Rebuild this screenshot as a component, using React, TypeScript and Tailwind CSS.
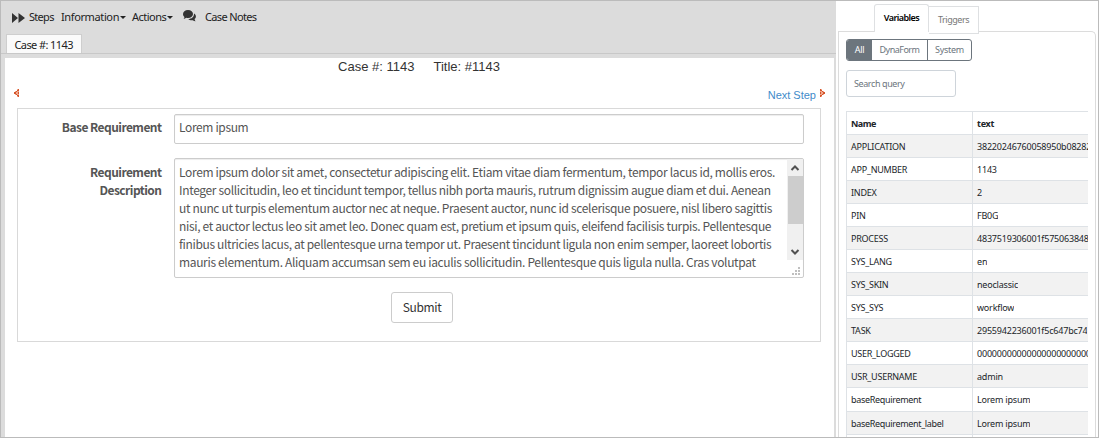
import React from "react";

const rows: [string, string][] = [
  ["APPLICATION", "38220246760058950b08282"],
  ["APP_NUMBER", "1143"],
  ["INDEX", "2"],
  ["PIN", "FB0G"],
  ["PROCESS", "4837519306001f575063848"],
  ["SYS_LANG", "en"],
  ["SYS_SKIN", "neoclassic"],
  ["SYS_SYS", "workflow"],
  ["TASK", "2955942236001f5c647bc74"],
  ["USER_LOGGED", "00000000000000000000000"],
  ["USR_USERNAME", "admin"],
  ["baseRequirement", "Lorem ipsum"],
  ["baseRequirement_label", "Lorem ipsum"],
];

const description = [
  "Lorem ipsum dolor sit amet, consectetur adipiscing elit. Etiam vitae diam fermentum, tempor lacus id, mollis eros.",
  "Integer sollicitudin, leo et tincidunt tempor, tellus nibh porta mauris, rutrum dignissim augue diam et dui. Aenean",
  "ut nunc ut turpis elementum auctor nec at neque. Praesent auctor, nunc id scelerisque posuere, nisl libero sagittis",
  "nisi, et auctor lectus leo sit amet leo. Donec quam est, pretium et ipsum quis, eleifend facilisis turpis. Pellentesque",
  "finibus ultricies lacus, at pellentesque urna tempor ut. Praesent tincidunt ligula non enim semper, laoreet lobortis",
  "mauris elementum. Aliquam accumsan sem eu iaculis sollicitudin. Pellentesque quis ligula nulla. Cras volutpat",
];

function Caret() {
  return <span className="ml-px mb-px h-0 w-0 border-x-[3px] border-t-[3px] border-x-transparent border-t-[#222]" />;
}

function Toolbar() {
  return (
    <div className="flex h-[33px] items-center pl-[11px] font-['Noto_Sans',sans-serif] text-[11px] text-[#222]">
      <svg className="mr-1 h-[10px] w-[13px]" viewBox="0 0 13 10" fill="#333">
        <path d="M0 0 6 5 0 10ZM6.5 0 13 5 6.5 10Z" />
      </svg>
      <span className="w-[32px] tracking-[-0.7px]">Steps</span>
      <span className="flex w-[71px] items-center tracking-[-0.38px]">Information<Caret /></span>
      <span className="flex w-[51px] items-center tracking-[-0.5px]">Actions<Caret /></span>
      <svg className="mb-[3px] h-[12px] w-[13px]" viewBox="0 0 13 12" fill="#333">
        <path d="M5 0C8 0 10 1.7 10 4S8 8 5 8C4.4 8 3.8 7.9 3.3 7.8 2.5 8.5 1.5 9 .6 9 1.1 8.3 1.4 7.6 1.4 7 .5 6.2 0 5.200 0 4 0 1.700 2 0 5 0Z" />
        <path d="M11 3.500C12.200 4.200 12.900 5.300 12.900 6.500 12.900 7.500 12.400 8.400 11.600 9 11.600 9.900 12 10.600 12.600 11.300 11.500 11.300 10.500 10.800 9.700 10.200 8 10.500 6.200 10 5.200 9 8.700 9 11.200 6.800 11 3.500Z" />
      </svg>
      <span className="ml-[9px] tracking-[-0.65px]">Case Notes</span>
    </div>
  );
}

function StepArrow({ flip = false }: { flip?: boolean }) {
  return (
    <svg className={flip ? "h-[8px] w-[6px] -scale-x-100" : "h-[8px] w-[6px]"} viewBox="0 0 6 8" shapeRendering="crispEdges">
      <path d="M3 0h2v8H3zM1 2h2v4H1zM0 3h1v2H0z" fill="#f0a78c" />
      <path d="M4 0h1v2H4zM2 2h1v1H2zM3 1h1v1H3zM0 3h2v2H0zM2 5h1v1H2zM3 6h1v1H3zM4 6h1v2H4zM4 3h1v2H4z" fill="#d4552c" />
    </svg>
  );
}

function CaseForm() {
  return (
    <div className="ml-3 mt-[6px] h-[234px] w-[804px] border border-[#d9d9d9] pt-[5px] font-['Noto_Sans_CJK_SC',sans-serif] text-[#555]">
      <div className="flex h-[30px]">
        <div className="w-[143.500px] pt-[4px] text-right text-[12px] font-bold leading-[18px] tracking-[-0.54px]">Base Requirement</div>
        <div className="ml-[12.500px] w-[630px] rounded-[2px] border border-[#ccc] pl-[4px] pt-[2px] text-[12px] leading-[20px] tracking-[-0.37px] shadow-[inset_0_1px_1px_rgba(0,0,0,0.075)]">Lorem ipsum</div>
      </div>
      <div className="mt-[14px] flex h-[120px]">
        <div className="w-[143.500px] pt-[5px] text-right text-[12px] font-bold leading-[18px] tracking-[-0.54px]">Requirement<br />Description</div>
        <div className="ml-[12.500px] flex w-[630px] overflow-hidden rounded-[2px] border border-[#ccc] shadow-[inset_0_1px_1px_rgba(0,0,0,0.075)]">
          <div className="w-[612px] whitespace-nowrap pl-[4px] pt-[4px] text-[12px] leading-[18px] tracking-[-0.343px]">
            {description.map((line) => <div key={line}>{line}</div>)}
          </div>
          <div className="flex w-[16px] flex-col">
            <div className="flex h-[101px] flex-col items-center justify-between bg-[#f0f0f0]">
              <svg className="h-[17px] w-[16px]" viewBox="0 0 16 17" fill="none" stroke="#505050" strokeWidth="2"><path d="m4.500 11 3.500-3.500L11.500 11" /></svg>
              <div className="mb-auto h-[48px] w-[15px] bg-[#cdcdcd]" />
              <svg className="h-[17px] w-[16px]" viewBox="0 0 16 17" fill="none" stroke="#505050" strokeWidth="2"><path d="m4.500 7 3.500 3.500L11.500 7" /></svg>
            </div>
            <svg className="h-[17px] w-[16px]" viewBox="0 0 16 17" fill="#bfbfbf" shapeRendering="crispEdges">
              <path d="M11 7h2v2h-2zM8 10h2v2H8zM11 10h2v2h-2zM5 13h2v2H5zM8 13h2v2H8zM11 13h2v2h-2z" />
            </svg>
          </div>
        </div>
      </div>
      <button className="ml-[373px] mt-[14px] block h-[31px] w-[62px] rounded-[3px] border border-[#ccc] bg-white pb-[2px] text-[12px] leading-[26px] tracking-[-0.35px] text-[#333]">Submit</button>
    </div>
  );
}

function CasePane() {
  return (
    <main className="flex w-[835px] flex-col bg-[#dcdcdc]">
      <Toolbar />
      <div className="flex h-[20px] border-b border-[#c8c8c8] pl-[5px]">
        <div className="w-[76px] border border-b-0 border-[#cecece] bg-[#fafafa] pl-[7.500px] font-['Noto_Sans',sans-serif] text-[11px] leading-[20px] tracking-[-0.6px] text-[#222]">Case #: 1143</div>
      </div>
      <div className="ml-[4px] mr-[2px] mt-1 flex-1 bg-white font-['Liberation_Sans',sans-serif]">
        <div className="flex h-[17px] justify-center gap-[19px] pr-px text-[13px] leading-[17px] text-[#333]">
          <span>Case #: 1143</span><span>Title: #1143</span>
        </div>
        <div className="mt-[12px] flex h-[15px] items-start justify-between pl-[9px] pr-[9px]">
          <div className="pt-[2px]"><StepArrow /></div>
          <div className="flex items-start gap-[3px] pt-[2px] text-[11px] leading-[13px] text-[#428bca]"><span>Next Step</span><StepArrow flip /></div>
        </div>
        <CaseForm />
      </div>
    </main>
  );
}

function VariablesPane() {
  return (
    <aside className="flex w-[262px] flex-col bg-white pl-[2px] font-['Noto_Sans',sans-serif] text-[9px] tracking-[-0.25px]">
      <div className="z-10 -mb-px flex h-[31px] items-start pl-[36px] pt-[3px]">
        <div className="h-[28px] w-[55px] rounded-t-[3px] border border-b-0 border-[#dee0e2] bg-white text-center font-semibold leading-[26px] tracking-[-0.55px] text-black">Variables</div>
        <div className="mt-[2px] h-[28px] w-[50px] border border-l-0 border-[#dee0e2] bg-white text-center leading-[26px] tracking-[-0.45px] text-[#777]">Triggers</div>
      </div>
      <section className="mr-[2px] flex-1 overflow-hidden rounded-tr-[5px] border border-b-0 border-[#dcdcdc] pl-[7px] pr-[7px] pt-[7px]">
        <div className="flex h-[22px] w-[126px] overflow-hidden rounded-[3px] border border-[#6c757d] text-center leading-[20px] text-[#6c757d]">
          <span className="w-[25px] bg-[#6c757d] text-white">All</span>
          <span className="w-[56px] border-r border-[#6c757d] tracking-[-0.5px]">DynaForm</span>
          <span className="flex-1">System</span>
        </div>
        <div className="mt-[9px] h-[27px] w-[110px] rounded-[3px] border border-[#ced4da] pl-[7px] leading-[25px] tracking-[-0.4px] text-[#6c757d]">Search query</div>
        <div className="mt-[14px] border-l border-t border-[#dee2e6] leading-[22px] text-[#212529]">
          <div className="flex h-[23px] border-b border-[#dee2e6] font-bold">
            <div className="w-[126px] border-r border-[#dee2e6] pl-[4px] pt-px tracking-[-0.5px]">Name</div><div className="pl-[4px] pt-px">text</div>
          </div>
          {rows.map(([name, value], i) => (
            <div key={name} className={`flex overflow-hidden border-b border-[#dee2e6] ${i === 11 ? "h-[24px]" : "h-[23px]"} ${i % 2 === 0 ? "bg-[#f2f2f2]" : "bg-white"}`}>
              <div className={`w-[126px] shrink-0 border-r border-[#dee2e6] pl-[4px] pt-px ${i > 10 ? "tracking-[-0.32px]" : ""}`}>{name}</div>
              <div className="min-w-0 overflow-hidden whitespace-nowrap pl-[4px] pt-px tracking-[-0.2px]">{value}</div>
            </div>
          ))}
          <div className="flex h-[23px]"><div className="w-[126px] border-r border-[#dee2e6]" /></div>
        </div>
      </section>
    </aside>
  );
}

export default function App() {
  return (
    <div className="flex h-[438px] w-[1099px] overflow-hidden border border-[#bbb] bg-white">
      <CasePane />
      <VariablesPane />
    </div>
  );
}
